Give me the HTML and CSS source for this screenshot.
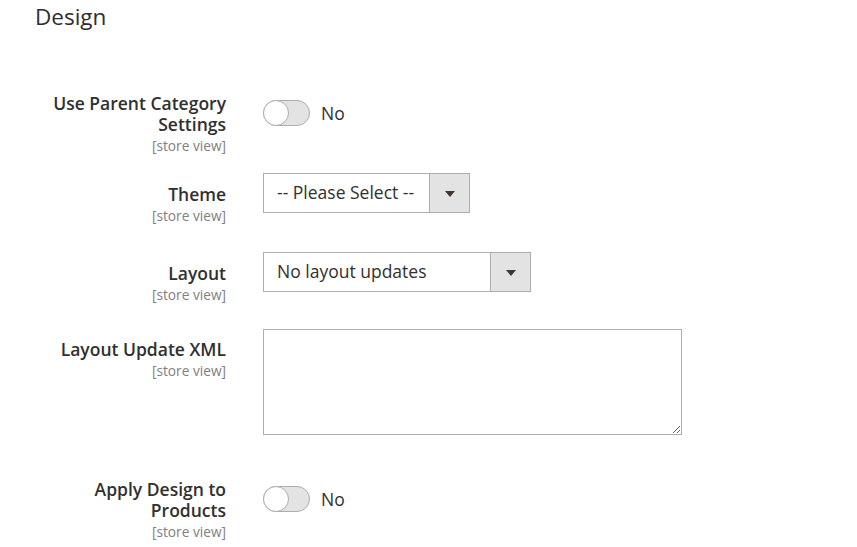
FILE: index.html
```html
<!DOCTYPE html>
<html lang="en">
<head>
<meta charset="utf-8">
<title>Design</title>
<link rel="stylesheet" href="styles.css">
</head>
<body>
<div class="page">
  <h2 class="section-title">Design</h2>
  <div class="form">
    <div class="field field-switch-first">
      <div class="label">
        <span class="label-text">Use Parent Category Settings</span>
        <span class="scope">[store view]</span>
      </div>
      <div class="control control-switch">
        <span class="switch"><span class="knob"></span></span>
        <span class="switch-text">No</span>
      </div>
    </div>
    <div class="field field-theme">
      <div class="label label-select">
        <span class="label-text">Theme</span>
        <span class="scope">[store view]</span>
      </div>
      <div class="control">
        <div class="select select-theme">
          <span class="select-value">-- Please Select --</span>
          <span class="select-btn"><span class="arrow"></span></span>
        </div>
      </div>
    </div>
    <div class="field field-layout">
      <div class="label label-select">
        <span class="label-text">Layout</span>
        <span class="scope">[store view]</span>
      </div>
      <div class="control">
        <div class="select select-layout">
          <span class="select-value">No layout updates</span>
          <span class="select-btn"><span class="arrow"></span></span>
        </div>
      </div>
    </div>
    <div class="field field-xml">
      <div class="label label-xml">
        <span class="label-text">Layout Update XML</span>
        <span class="scope">[store view]</span>
      </div>
      <div class="control">
        <textarea class="textarea"></textarea>
      </div>
    </div>
    <div class="field field-apply">
      <div class="label">
        <span class="label-text">Apply Design to Products</span>
        <span class="scope">[store view]</span>
      </div>
      <div class="control control-switch">
        <span class="switch"><span class="knob"></span></span>
        <span class="switch-text">No</span>
      </div>
    </div>
  </div>
</div>
</body>
</html>
```

FILE: styles.css
```css
html, body {
  margin: 0;
  padding: 0;
  background: #ffffff;
}
body {
  font-family: "Open Sans", "Noto Sans", "Liberation Sans", sans-serif;
  color: #303030;
}
.page {
  width: 857px;
  height: 547px;
  overflow: hidden;
}
.section-title {
  margin: 2px 0 0 35px;
  font-size: 22.5px;
  line-height: 30px;
  font-weight: 400;
  color: #2e2e2e;
}
.form {
  margin-top: 61px;
}
.field {
  display: flex;
  align-items: flex-start;
}
.field-switch-first { height: 80px; }
.field-theme { height: 79px; }
.field-layout { height: 77px; }
.field-xml { height: 150px; }
.field-apply { height: 70px; }

.label {
  width: 180px;
  margin-left: 46px;
  text-align: right;
  flex: none;
}
.label-select {
  padding-top: 11px;
}
.label-xml {
  padding-top: 10px;
}
.label-text {
  display: block;
  font-size: 17.5px;
  line-height: 21px;
  font-weight: 600;
  color: #303030;
}
.scope {
  display: block;
  margin-top: 2px;
  font-size: 13.7px;
  line-height: 17px;
  color: #808080;
}
.control {
  margin-left: 37px;
}
.control-switch {
  display: flex;
  align-items: center;
  margin-top: 7px;
}
.switch {
  position: relative;
  display: block;
  width: 45px;
  height: 24px;
  border: 1px solid #adadad;
  border-radius: 13px;
  background: #e3e3e3;
}
.knob {
  position: absolute;
  left: -1px;
  top: -1px;
  width: 24px;
  height: 24px;
  border: 1px solid #adadad;
  border-radius: 50%;
  background: #ffffff;
}
.switch-text {
  margin-left: 11px;
  font-size: 17.5px;
  line-height: 24px;
  color: #303030;
}
.select {
  display: flex;
  height: 38px;
  border: 1px solid #adadad;
  background: #ffffff;
  box-sizing: content-box;
}
.select-theme { width: 205px; }
.select-layout { width: 266px; }
.select-value {
  flex: 1;
  padding-left: 13px;
  font-size: 17.5px;
  line-height: 37px;
  color: #303030;
  white-space: nowrap;
}
.select-btn {
  width: 39px;
  border-left: 1px solid #adadad;
  background: #e3e3e3;
  display: flex;
  align-items: center;
  justify-content: center;
}
.arrow {
  width: 0;
  height: 0;
  border-left: 5px solid transparent;
  border-right: 5px solid transparent;
  border-top: 6px solid #41362f;
  margin-top: 2px;
}
.textarea {
  display: block;
  width: 417px;
  height: 104px;
  margin: 0;
  padding: 0;
  border: 1px solid #adadad;
  border-radius: 0;
  background: #ffffff;
  resize: both;
  font-family: "Open Sans", sans-serif;
}
```
